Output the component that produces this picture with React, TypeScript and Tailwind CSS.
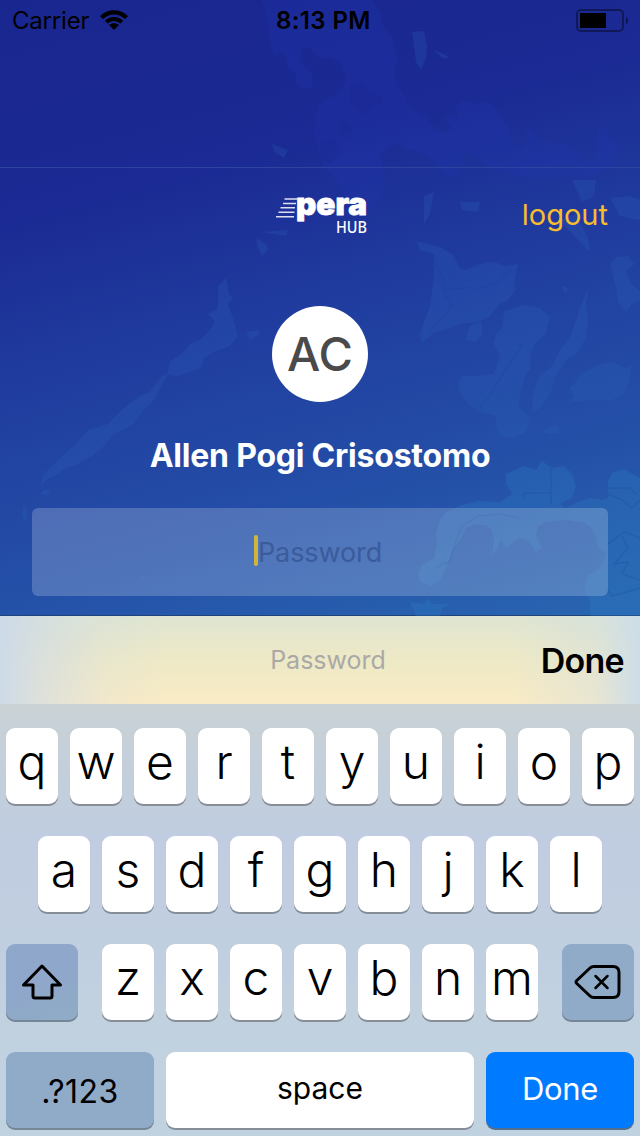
import React from "react";

const land =
  "M262 0H372L380 12L384 28L392 36L396 52L398 62L394 68L396 82L404 96L408 106L424 116L436 128L446 132L452 126L444 120L450 114L458 118L456 106L464 100L478 104L484 100L496 108L502 120L508 126L511 138L514 144L522 148L528 140L524 130L532 128L536 138L556 144L566 142L572 150L584 156L576 162L590 160L596 154L598 130L604 124L610 136L618 142L617 154L612 166L600 172L590 178L576 176L556 178L542 176L530 180L520 176L500 172L484 164L472 156L466 148L464 160L460 172L452 178L440 170L430 158L418 152L404 148L396 144L386 148L380 156L384 170L386 184L382 198L372 208L358 206L342 194L336 178L324 168L318 150L314 132L318 106L326 100L342 90L346 78L340 62L330 57L318 58L310 48L302 46L300 60L312 74L312 88L302 90L296 82L296 74L288 68L286 58L280 50L276 58L270 44L268 22Z";

const lakes =
  "M350 86L358 82L366 88L372 94L382 96L382 104L374 106L368 114L360 112L350 104ZM340 120L350 122L352 132L344 140L340 134ZM320 142L334 138L340 152L330 164L320 158Z";

const islets =
  "M412 32L424 31L427 46L426 58L421 70L416 62L414 46ZM434 50L444 54L450 58L442 58ZM272 144L288 150L284 158L274 152ZM416 241L428 244L440 247L452 254L460 268L466 270L480 264L494 262L506 266L518 264L514 284L516 290L508 300L500 304L490 316L478 322L460 324L446 330L436 332L428 338L422 343L420 334L424 322L430 306L432 290L434 278L434 254L420 250ZM472 324L482 322L482 334L476 342L466 340L468 330ZM504 311L524 305L540 308L550 317L546 334L534 344L530 356L531 368L524 378L520 396L518 406L530 418L526 432L514 438L500 436L496 426L496 416L480 412L468 404L460 392L458 384L462 376L478 376L494 374L500 356L494 344L496 334L502 328ZM589 286L586 304L588 322L586 338L576 354L566 360L556 376L550 394L540 408L533 412L532 400L538 378L552 366L560 350L570 338L580 308ZM570 388L582 374L600 364L612 362L626 368L632 366L628 384L624 394L612 400L590 400L574 402L568 403L574 396ZM610 264L616 258L624 266L632 284L640 292V300L632 304L626 312L618 302L616 288ZM616 257L628 256L634 264L628 270L620 268ZM562 286L568 288L566 294ZM544 430L556 424L560 430L558 434L546 434ZM560 220L576 214L588 238L590 252L578 240ZM610 198L630 196L640 200V220L620 216ZM572 180H596L594 196L582 202ZM460 202L480 202L478 212L462 210ZM424 196L434 192L430 214L424 224ZM226 278L229 294L233 298L228 304L233 318L238 336L230 346L214 352L204 358L201 368L190 372L176 376L168 374L160 388L154 400L142 412L134 424L114 434L104 446L92 456L78 464L66 468L58 474L46 480L40 486L44 474L58 460L78 442L88 430L108 424L124 408L140 396L150 392L160 378L168 372L170 362L184 352L190 344L200 340L210 330L215 322L208 314L218 308L218 286ZM246 332L258 330L260 334L250 340ZM256 238L266 244L268 250L262 256L258 248ZM262 232L288 230L286 236ZM44 490L50 490L48 496L40 494ZM24 504L28 512L26 522L22 516ZM140 576L146 577L144 580Z";

const southLand =
  "M418 573L422 565L434 558L437 544L436 534L440 520L446 512L462 505L478 501L500 502L512 494L506 484L506 474L524 466L536 470L542 461L552 468L564 466L572 474L576 486L572 498L560 504L566 508L578 502L590 498L602 500L608 498L608 482L612 473L624 469L640 478V616H590V600L584 590L588 576L600 568L606 554L598 546L596 536L590 526L582 522L566 520L546 522L538 526L536 536L542 548L536 552L528 540L518 538L512 544L506 548L500 540L498 548L492 556L494 540L492 530L488 526L476 524L466 528L460 540L452 550L446 568L440 580L432 586L420 582ZM410 602L424 604L428 598L432 604L450 604L442 608L440 616H416Z";

const borders =
  "M372 0L373 45L342 60M373 48L380 70L394 94L394 110L380 124L366 136L364 150M320 124L338 124L346 120L360 124L364 136M262 0L272 14L292 26L300 40L312 30L320 38L336 26L340 0M448 126L460 120L480 128L508 144L514 150M468 136L480 132M434 258L440 274L446 282L442 290L460 288L480 288L494 284L512 270M444 284L446 296L452 306L440 320L430 330M516 344L522 345L518 352L504 372L490 396L477 410M551 468V504M524 500V493H551M437 568L442 564L450 562L456 540L462 526L478 516L500 514L520 518M608 488H630L636 494M608 494L622 500L632 508L640 500M608 544L624 532L640 538M622 536L628 548L614 564L628 562L622 574L640 580M606 588L612 596L640 588";

function MapBackdrop() {
  return (
    <svg className="absolute inset-0" width="640" height="616" viewBox="0 0 640 616" aria-hidden="true">
      <path d={land} fill="#2038b2" opacity="0.24" />
      <path d={lakes} fill="#1b2790" opacity="0.4" />
      <path d={islets} fill="#2d65bd" opacity="0.24" />
      <path d={southLand} fill="#3084c6" opacity="0.26" />
      <path d={borders} fill="none" stroke="#183a98" strokeWidth="1.1" opacity="0.25" />
    </svg>
  );
}

function StatusBar() {
  return (
    <div className="flex h-[42px] items-center justify-between pl-3 pr-[11px] text-[24px] text-black">
      <div className="flex w-[264px] items-center gap-[11px]">
        <span className="tracking-[-0.2px]">Carrier</span>
        <svg className="-mt-0.5" width="28" height="21" viewBox="0 0 28 21" fill="none" stroke="#000" aria-label="Wi-Fi">
          <path d="M1.5 7.6C8.5.5 19.5.5 26.5 7.6" strokeWidth="4.2" />
          <path d="M6.2 12.2C10.7 7.9 17.3 7.9 21.8 12.2" strokeWidth="3.8" />
          <path d="M9.1 15C11.9 12.5 16.1 12.5 18.9 15L14 20Z" fill="#000" stroke="none" />
        </svg>
      </div>
      <span className="w-[95px] whitespace-nowrap font-semibold tracking-[0.4px]">8:13 PM</span>
      <div className="-mt-0.5 flex w-[258px] justify-end">
        <svg width="54" height="24" viewBox="0 0 54 24" aria-label="Battery">
          <rect x="2" y="2" width="46" height="21" rx="4" fill="none" stroke="#000" strokeOpacity="0.4" strokeWidth="2" />
          <rect x="5" y="5" width="26" height="15" fill="#000" />
          <path d="M51 9C53.8 10 53.8 15 51 16Z" fill="#000" opacity="0.5" />
        </svg>
      </div>
    </div>
  );
}

function Logo() {
  return (
    <svg className="overflow-visible" width="92" height="44" viewBox="0 0 92 44" fill="#fff" aria-label="pera HUB">
      <path
        d="M9.500 6H22M8 10.400H21M5.500 14.800H20M3.500 19.200H19.500M1 23.700H19"
        stroke="#fff"
        strokeWidth="1.5"
        strokeOpacity="0.85"
      />
      <text
        x="21"
        y="21.500"
        textLength="71"
        lengthAdjust="spacingAndGlyphs"
        className="font-['Inter'] text-[31px] font-black"
        stroke="#fff"
        strokeWidth="0.8"
      >
        pera
      </text>
      <text
        x="61"
        y="39.500"
        textLength="31"
        lengthAdjust="spacingAndGlyphs"
        className="font-['Noto_Sans'] text-[16.500px] font-medium"
      >
        HUB
      </text>
    </svg>
  );
}

function Key({ label }: { label: string }) {
  return (
    <button className="h-[76px] w-[52px] rounded-[9px] bg-white text-[48px] leading-[68px] font-[350] text-black shadow-[0_2px_0_#868d97]">
      <span className="block h-[76px]">{label}</span>
    </button>
  );
}

const sideKey = "flex h-[76px] items-center justify-center rounded-[9px] bg-[#8fabc8] shadow-[0_2px_0_#758697]";

function Keyboard() {
  return (
    <div className="flex h-[432px] flex-col gap-8 bg-[linear-gradient(180deg,#cad2d5_0px,#c4cfda_60px,#c0cde0_130px,#c0cee0_210px,#c1d1e0_300px,#c0d2df_432px)] px-[6px] pt-6">
      <div className="flex gap-3">{"qwertyuiop".split("").map((k) => <Key key={k} label={k} />)}</div>
      <div className="flex justify-center gap-3">{"asdfghjkl".split("").map((k) => <Key key={k} label={k} />)}</div>
      <div className="flex justify-between">
        <button className={sideKey + " w-[72px] bg-[linear-gradient(155deg,#8fa7ca_50%,#8facc5)]"} aria-label="Shift">
          <svg width="42" height="38" viewBox="0 0 42 38" fill="none" stroke="#000" strokeWidth="3" strokeLinejoin="round">
            <path d="M21 3L39.500 22H31V33Q31 35 29 35H14Q12 35 12 33V22H2.500Z" />
          </svg>
        </button>
        <div className="flex gap-3">{"zxcvbnm".split("").map((k) => <Key key={k} label={k} />)}</div>
        <button className={sideKey + " w-[72px]"} aria-label="Delete">
          <svg width="48" height="36" viewBox="0 0 48 36" fill="none" stroke="#000" strokeWidth="3" strokeLinecap="round" strokeLinejoin="round">
            <path d="M20 2.500H39Q45 2.500 45 8.500V27.500Q45 33.500 39 33.500H20Q17.500 33.500 16 32L2.800 19.500Q1.300 18 2.800 16.500L16 4Q17.500 2.500 20 2.500Z" />
            <path d="M21.500 12L33.500 24M33.500 12L21.500 24" strokeWidth="2.500" />
          </svg>
        </button>
      </div>
      <div className="flex gap-3">
        <button className={sideKey + " w-[148px] pt-[4px] text-[32px]"}>
          <span className="tracking-[0.5px]">.?123</span>
        </button>
        <button className="h-[76px] w-[308px] rounded-[9px] bg-white text-[30px] leading-[73px] text-black shadow-[0_2px_0_#868d97]">
          <span className="block h-[76px]">space</span>
        </button>
        <button className="h-[76px] w-[148px] rounded-[9px] bg-[#007aff] text-[31px] leading-[73px] tracking-[-0.3px] text-white shadow-[0_2px_0_#52708e]">
          <span className="block h-[76px]">Done</span>
        </button>
      </div>
    </div>
  );
}

export default function App() {
  return (
    <main className="h-[1136px] w-[640px] overflow-hidden font-['Inter',sans-serif]">
      <section className="relative h-[616px] border-b border-[#1f4379] bg-[linear-gradient(165deg,#1a268f_0%,#1b2a94_28%,#203e9f_52%,#2450a8_76%,#2966b1_100%)]">
        <MapBackdrop />
        <div className="relative">
          <div className="h-[168px] border-b border-[#2d459f]">
            <StatusBar />
          </div>
          <header className="grid h-24 grid-cols-3 items-center px-8">
            <span />
            <div className="flex justify-center pb-[3px] pl-px">
              <Logo />
            </div>
            <button className="pb-[2px] text-right text-[29px] text-[#f8bd2e]">logout</button>
          </header>
          <div className="flex flex-col items-center px-8 pt-[42px]">
            <div className="flex size-24 items-center justify-center rounded-full bg-white pt-px text-[47px] font-[450] text-[#4a4a4a]">
              AC
            </div>
            <h1 className="mt-[33px] text-[32px] leading-[42px] font-bold tracking-[-0.22px] whitespace-nowrap text-white">
              Allen Pogi Crisostomo
            </h1>
            <div className="mt-[31px] flex h-[88px] w-full items-center justify-center rounded-[6px] bg-white/20 pr-1 text-[27px] tracking-[-0.1px] text-[#3b5b9b]">
              <span className="mb-[3px] h-[31px] w-1 rounded-sm bg-[#d0b53b]" />
              <span className="pt-0.5">Password</span>
            </div>
          </div>
        </div>
      </section>
      <div className="grid h-[88px] grid-cols-[1fr_116px_1fr] items-center bg-[linear-gradient(90deg,#cddae8_0%,#cddae8a0_6%,#cddae830_16%,#cddae800_26%,#cddae800_80%,#cddde660_93%,#cddde8_100%),linear-gradient(180deg,#dfe5d2,#eee9c6_50%,#faebc5)] pr-4 pl-8">
        <span />
        <span className="pt-0.5 text-center text-[25px] text-[#aaa9a7]">Password</span>
        <button className="text-right text-[34px] font-semibold tracking-[-0.7px] text-black">Done</button>
      </div>
      <Keyboard />
    </main>
  );
}
